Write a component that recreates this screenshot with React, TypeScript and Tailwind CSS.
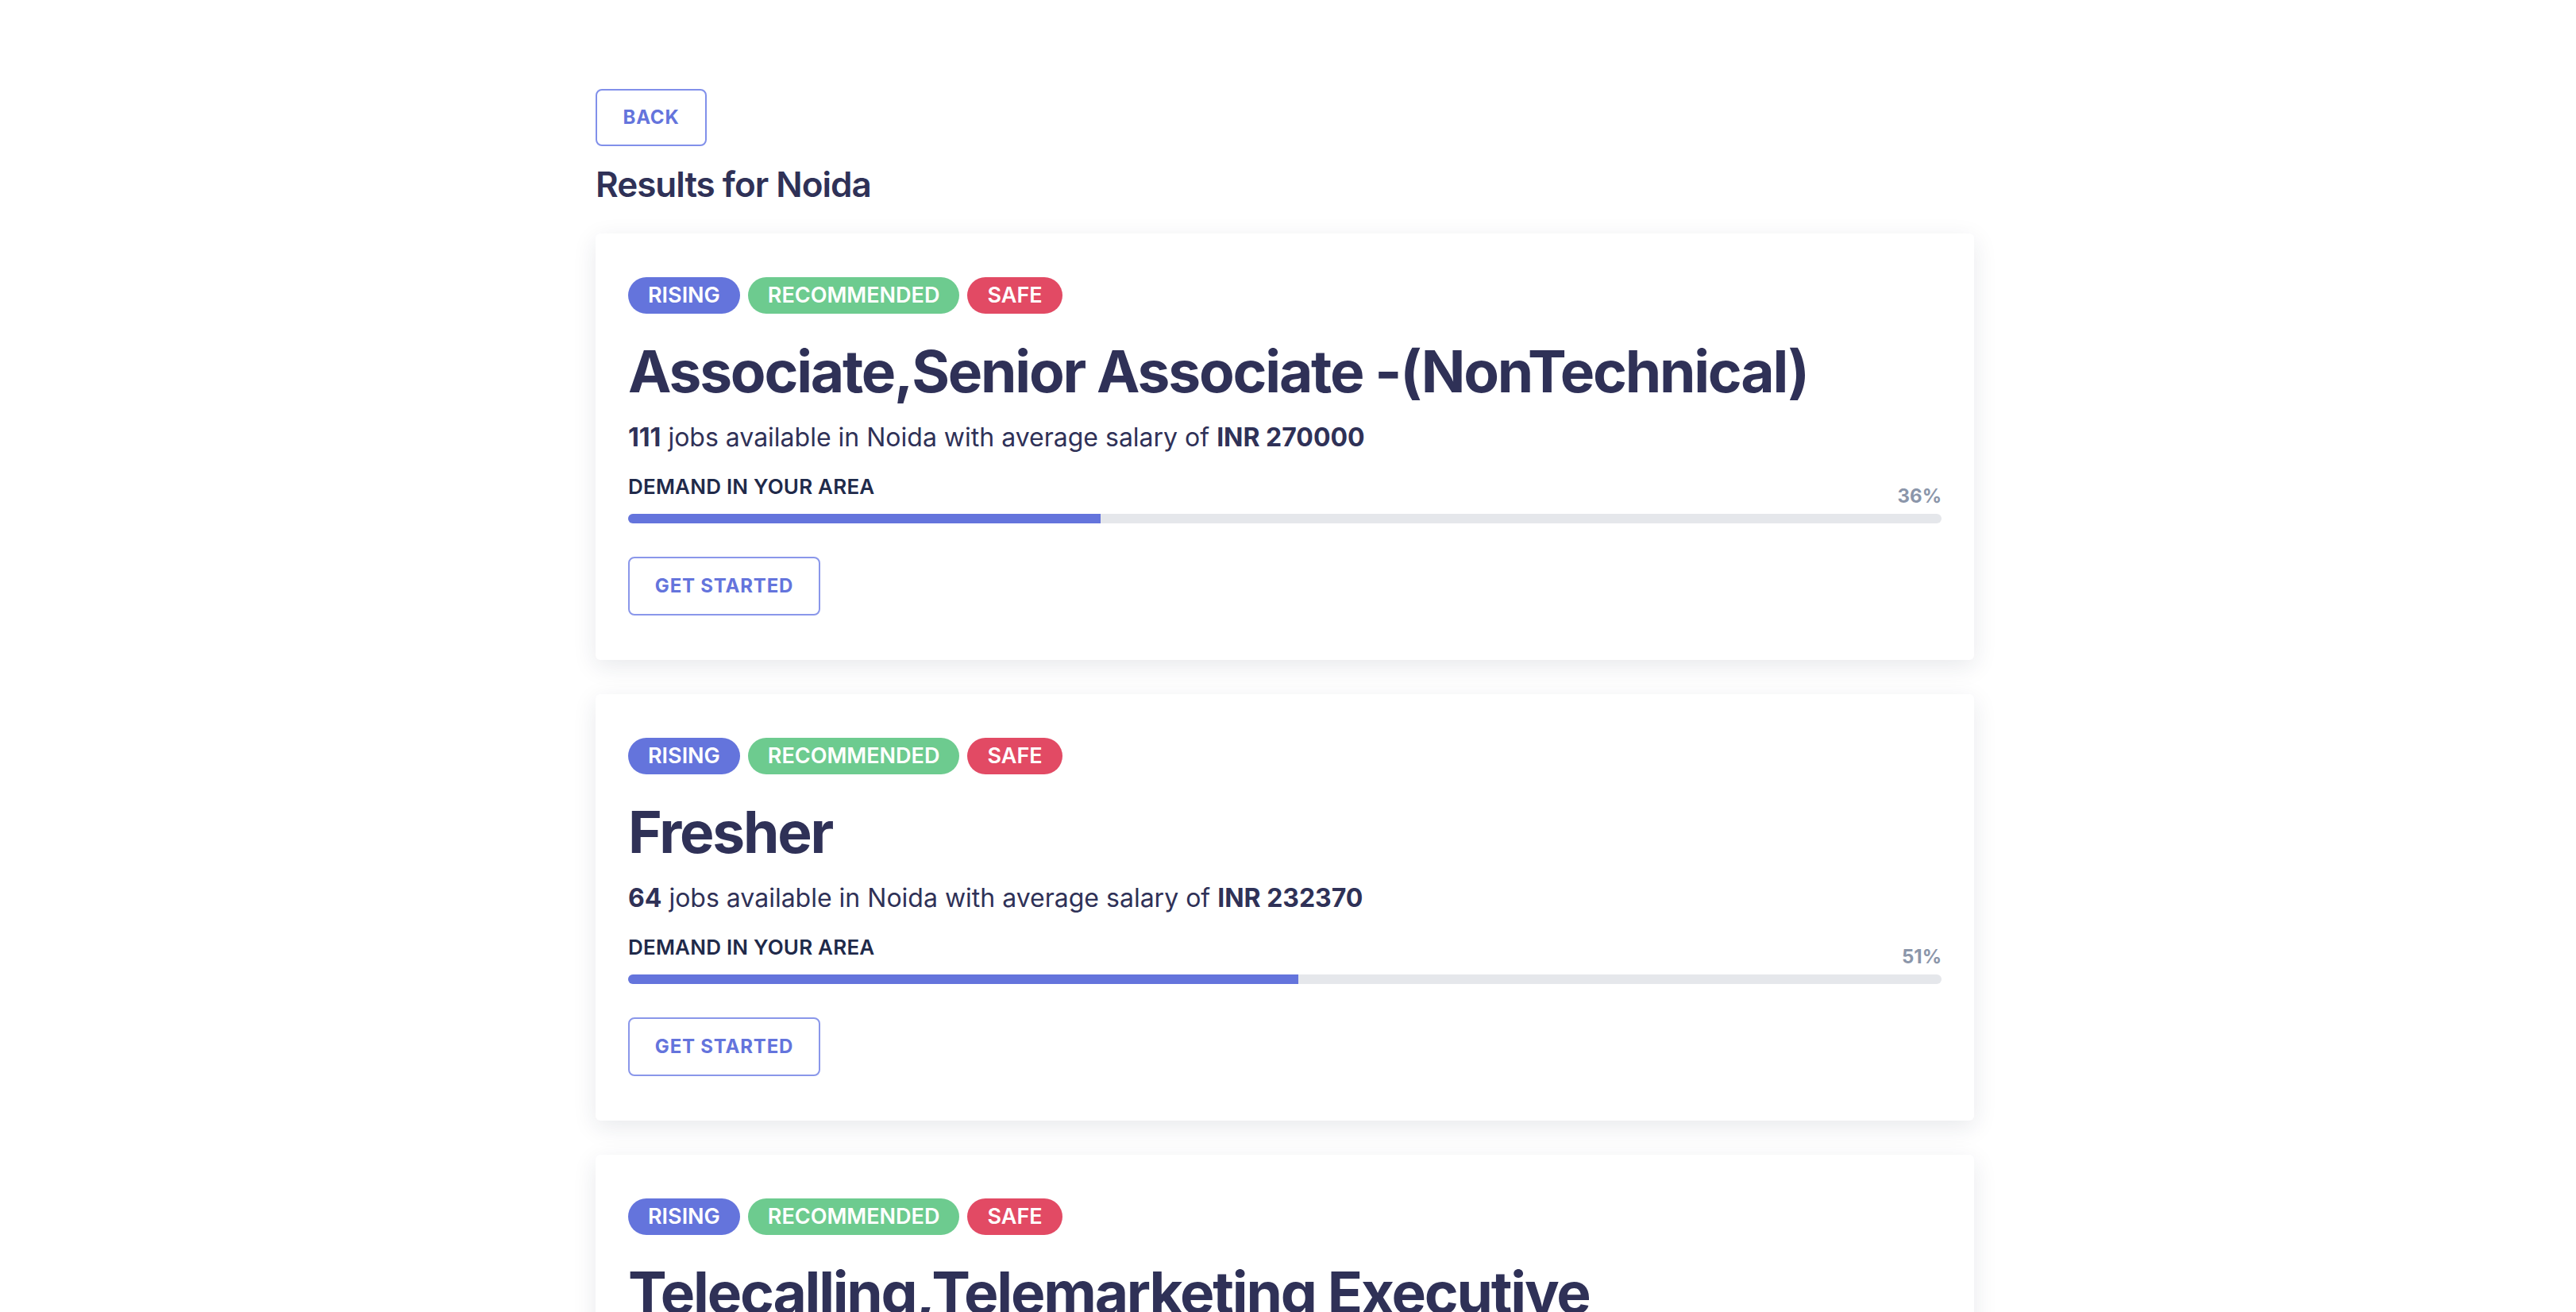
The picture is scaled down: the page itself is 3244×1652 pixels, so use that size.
import React from "react";

const jobs = [
  { title: "Associate,Senior Associate -(NonTechnical)", count: 111, salary: 270000, demand: 36 },
  { title: "Fresher", count: 64, salary: 232370, demand: 51 },
  { title: "Telecalling,Telemarketing Executive", count: 58, salary: 198000, demand: 44 },
];

function Badge({ label, color }: { label: string; color: string }) {
  return (
    <span className={`inline-flex h-[46px] items-center rounded-full px-[25px] text-[27px] font-semibold uppercase text-white ${color}`}>
      {label}
    </span>
  );
}

function JobCard({ job }: { job: (typeof jobs)[number] }) {
  return (
    <div className="mb-[43px] rounded-md bg-white px-[41px] pb-[56px] pt-[55px] shadow-[0_8px_30px_rgba(30,35,70,0.10)]">
      <div className="flex gap-[10px]">
        <Badge label="Rising" color="bg-[#6474dc]" />
        <Badge label="Recommended" color="bg-[#6dcb8f]" />
        <Badge label="Safe" color="bg-[#e24a64]" />
      </div>
      <h2 className="mt-[28px] text-[73px] font-bold leading-[90px] tracking-[-2.2px] text-[#2f3157]">{job.title}</h2>
      <p className="mt-[18px] text-[32px] leading-[40px] text-[#2f3157]">
        <span className="font-bold">{job.count}</span> jobs available in Noida with average salary of{" "}
        <span className="font-bold">INR {job.salary}</span>
      </p>
      <div className="mt-[26px] flex items-end justify-between">
        <span className="mb-[10px] text-[26px] font-semibold uppercase leading-[32px] tracking-[0.2px] text-[#1f2a4a]">
          Demand in your area
        </span>
        <span className="text-[24px] font-bold leading-[28px] text-[#8b96aa]">{job.demand}%</span>
      </div>
      <div className="mt-[8px] h-[12px] w-full rounded-full bg-[#e5e7eb]">
        <div className="h-full rounded-l-full bg-[#6474dc]" style={{ width: `${job.demand}%` }} />
      </div>
      <button className="mt-[42px] h-[74px] w-[242px] rounded-lg border-2 border-[#8a97ea] text-[24px] font-bold uppercase tracking-[0.8px] text-[#6474dc]">
        Get Started
      </button>
    </div>
  );
}

export default function App() {
  return (
    <div className="h-[1652px] overflow-hidden bg-white font-['Inter',sans-serif]">
      <div className="w-[1736px] pt-[112px]" style={{ marginLeft: 750 }}>
        <button className="h-[72px] w-[140px] rounded-lg border-2 border-[#8190ea] text-[24px] font-bold uppercase tracking-[0.8px] text-[#6474dc]">
          Back
        </button>
        <h1 className="mt-[20px] text-[44px] font-semibold leading-[56px] tracking-[-1px] text-[#2f3157]">Results for Noida</h1>
        <div className="mt-[34px]">
          {jobs.map((job) => (
            <JobCard key={job.title} job={job} />
          ))}
        </div>
      </div>
    </div>
  );
}
